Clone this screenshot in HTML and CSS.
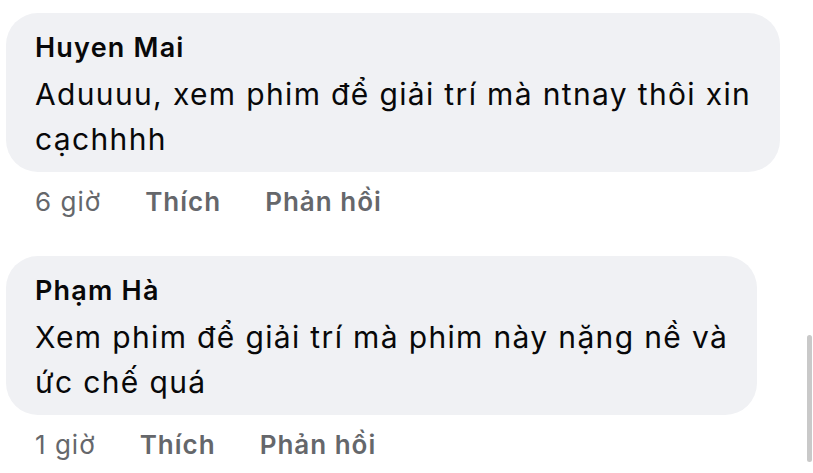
FILE: index.html
```html
<!DOCTYPE html>
<html lang="vi">
<head>
<meta charset="utf-8">
<link rel="stylesheet" href="styles.css">
</head>
<body>
<div class="thread">
  <div class="comment">
    <div class="bubble">
      <div class="name">Huyen Mai</div>
      <div class="text">Aduuuu, xem phim để giải trí mà ntnay thôi xin<br>cạchhhh</div>
    </div>
    <div class="meta">
      <span class="time">6 giờ</span>
      <span class="action">Thích</span>
      <span class="action">Phản hồi</span>
    </div>
  </div>
  <div class="comment">
    <div class="bubble">
      <div class="name">Phạm Hà</div>
      <div class="text">Xem phim để giải trí mà phim này nặng nề và<br>ức chế quá</div>
    </div>
    <div class="meta">
      <span class="time">1 giờ</span>
      <span class="action">Thích</span>
      <span class="action">Phản hồi</span>
    </div>
  </div>
</div>
<div class="scrollbar"></div>
</body>
</html>
```
FILE: styles.css
```css
html, body {
  margin: 0;
  padding: 0;
  background: #ffffff;
  height: 100%;
  overflow: hidden;
}
body {
  font-family: "Inter", "Noto Sans", sans-serif;
  color: #080809;
}
.thread {
  display: flex;
  flex-direction: column;
  gap: 39px;
  padding: 13px 0 0 6px;
}
.comment {
  display: flex;
  flex-direction: column;
  align-items: flex-start;
}
.bubble {
  background: #f0f1f4;
  border-radius: 32px;
  padding: 14px 29px 10px 29px;
  white-space: nowrap;
}
.name {
  font-size: 27px;
  font-weight: 600;
  line-height: 41px;
  letter-spacing: 1.2px;
}
.text {
  margin-top: 4px;
  font-size: 30px;
  line-height: 45px;
  letter-spacing: 1.35px;
}
.meta {
  display: flex;
  gap: 44px;
  margin-top: 15px;
  padding-left: 29px;
  font-size: 26px;
  line-height: 30px;
  letter-spacing: 1px;
  color: #65676b;
}
.action {
  font-weight: 600;
}
.scrollbar {
  position: absolute;
  left: 807px;
  top: 335px;
  width: 5px;
  height: 127px;
  border-radius: 3px;
  background: #c9c9c9;
}
```
